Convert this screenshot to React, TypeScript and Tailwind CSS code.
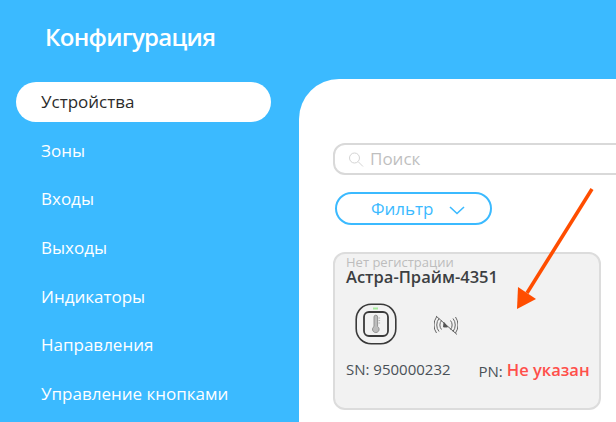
import React from "react";

const menu = ["Устройства", "Зоны", "Входы", "Выходы", "Индикаторы", "Направления", "Управление кнопками"];

const SearchIcon = () => (
  <svg width="16" height="17" viewBox="0 0 16 17" fill="none" stroke="#d4d4d4" strokeWidth="1">
    <circle cx="6.5" cy="7" r="5" />
    <path d="M10.2 10.7 L15 15.5" />
  </svg>
);

const DeviceIcon = () => (
  <svg width="42" height="42" viewBox="0 0 42 42" fill="none">
    <rect x="1.2" y="1.2" width="39.6" height="39.6" rx="15" stroke="#3a3a3a" strokeWidth="1.6" />
    <rect x="9" y="9" width="24" height="24" rx="5" stroke="#3a3a3a" strokeWidth="1.8" />
    <rect x="18" y="4.5" width="5" height="2" fill="#a5eb9b" />
    <path d="M19 14a1.8 1.8 0 0 1 3.6 0v9.5a3.3 3.3 0 1 1-3.6 0z" fill="#bdbdbd" stroke="#8a8a8a" strokeWidth="0.9" />
    <path d="M23.5 15h1.6M23.5 17.5h1.6M23.5 20h1.6" stroke="#999" strokeWidth="0.7" />
  </svg>
);

const NoSignalIcon = () => (
  <svg width="24" height="20" viewBox="0 0 24 20" fill="none" stroke="#555" strokeWidth="0.9">
    <path d="M7.5 5.5a7 7 0 0 0 0 9M5 3.5a10.5 10.5 0 0 0 0 13M2.5 2a14 14 0 0 0 0 16" />
    <path d="M16.5 5.5a7 7 0 0 1 0 9M19 3.5a10.5 10.5 0 0 1 0 13M21.5 2a14 14 0 0 1 0 16" />
    <path d="M10 7.5 L13.5 12 L9.5 12 Z" fill="#555" />
    <path d="M2 1 L23 19.5" strokeWidth="0.9" />
  </svg>
);

const App = () => {
  return (
    <div className="relative flex h-[422px] w-[616px] overflow-hidden bg-[#3bbaff] font-['Open_Sans',sans-serif]">
      <div className="w-[299px] shrink-0">
        <div className="pl-[45px] pt-[20px] text-[24px] font-semibold leading-[34px] tracking-[-0.7px] text-white">
          Конфигурация
        </div>
        <div className="mt-[28px] ml-[16px] flex w-[255px] flex-col gap-[8.6px]">
          {menu.map((item, i) => (
            <div
              key={item}
              className={
                i === 0
                  ? "flex h-[40px] items-center rounded-[20px] bg-white pl-[25px] text-[17px] text-[#2b2b2b]"
                  : "flex h-[40px] items-center pl-[25px] text-[17px] text-white"
              }
            >
              {item}
            </div>
          ))}
        </div>
      </div>

      <div className="mt-[79px] min-w-0 flex-1 rounded-tl-[40px] bg-white pl-[34px] pt-[64px]">
        <div className="flex h-[32px] w-[320px] items-center gap-[6px] rounded-l-[12px] border-2 border-[#d9d9d9] pl-[13px] text-[17px] text-[#bfbfbf]">
          <SearchIcon />
          <span>Поиск</span>
        </div>

        <div className="mt-[17px] ml-[2px] flex h-[33px] w-[157px] items-center rounded-[17px] border-2 border-[#3bbaff] pl-[34px] text-[17px] text-[#3bbaff]">
          <span>Фильтр</span>
          <svg className="ml-[15px] mt-[3px]" width="16" height="9" viewBox="0 0 16 9" fill="none" stroke="#3bbaff" strokeWidth="1.6">
            <path d="M1 1 L8 7.5 L15 1" />
          </svg>
        </div>

        <div className="mt-[27px] flex h-[158px] w-[268px] flex-col rounded-[12px] border-2 border-[#dcdcdc] bg-[#f2f2f2] pl-[11px]">
          <div className="mt-[1px] h-[14px] text-[13px] leading-[14px] text-[#bdbdbd]">Нет регистрации</div>
          <div className="text-[16.5px] font-semibold leading-[16px] text-[#3c3f42]">Астра-Прайм-4351</div>
          <div className="mt-[18px] flex items-center pl-[9px]">
            <DeviceIcon />
            <div className="ml-[37px] mt-[1px]">
              <NoSignalIcon />
            </div>
          </div>
          <div className="mt-[14px] flex items-start">
            <span className="text-[15px] leading-[20px] text-[#4a5157]">SN: 950000232</span>
            <span className="ml-[28px] mt-[2px] text-[15px] leading-[20px] text-[#4a5157]">PN:</span>
            <span className="ml-[4px] mt-[1px] text-[16.5px] font-semibold leading-[20px] text-[#ff4f4a]">Не указан</span>
          </div>
        </div>
      </div>

      {/* annotation arrow */}
      <svg className="absolute left-[505px] top-[180px]" width="100" height="140" viewBox="0 0 100 140" fill="none">
        <path d="M87 9 L22 113" stroke="#ff4d00" strokeWidth="3.6" />
        <path d="M12 129 L13 107 L31 119 Z" fill="#ff4d00" />
      </svg>
    </div>
  );
};

export default App;
